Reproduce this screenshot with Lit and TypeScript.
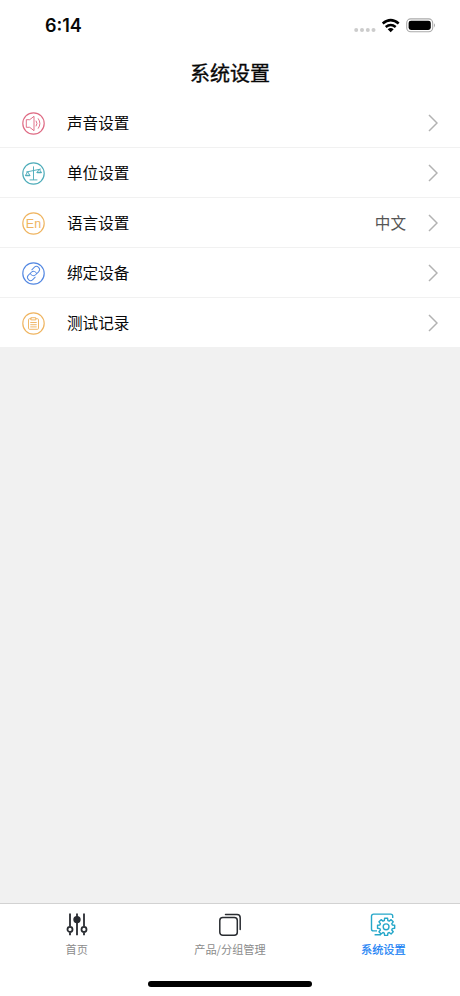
import { LitElement, html, css, svg } from "lit";
import { customElement } from "lit/decorators.js";

const gearPath = () => {
  const points: string[] = [];
  const polar = (r: number, deg: number) => {
    const a = (deg * Math.PI) / 180;
    return `${(r * Math.cos(a)).toFixed(2)} ${(r * Math.sin(a)).toFixed(2)}`;
  };
  for (let i = 0; i < 8; i++) {
    const a = i * 45 - 90;
    points.push(polar(6.5, a - 16), polar(8.7, a - 10), polar(8.7, a + 10), polar(6.5, a + 16));
  }
  return `M${points.join("L")}Z`;
};

const glyphs = {
  sound: svg`<path d="M6.2 9.2h3l4.3-3.4v14.4l-4.3-3.4h-3zM15.7 10.5q1.7 2.5 0 5M17.8 8.2q3.4 4.8 0 9.6"/>`,
  scale: svg`<path d="M13 6.3V19M9.5 19.4h7M6 11.5 20 8.6M5.2 14.6l2-3.4 2 3.4M16.7 11.8l2-3.2 2 3.2"/><path stroke-width="1.5" d="M5.3 14.9h3.8M16.8 12.1h3.8"/>`,
  language: svg`<text x="13" y="17.3" text-anchor="middle">En</text>`,
  link: svg`<g transform="rotate(-45 13 13)"><path d="M11.6 16.8H8.2a3.1 3.1 0 0 1 0-6.2h4.2a3.1 3.1 0 0 1 2.9 4.2M14.4 9.2h3.4a3.1 3.1 0 0 1 0 6.2h-4.2a3.1 3.1 0 0 1-2.9-4.2"/></g>`,
  record: svg`<path d="M10.6 8.2H9a1 1 0 0 0-1 1v8.6a1 1 0 0 0 1 1h8a1 1 0 0 0 1-1V9.2a1 1 0 0 0-1-1h-1.6M10.7 7.2h4.6v2.2h-4.6zM10.2 12h5.6M10.2 14.2h5.6M10.2 16.4h5.6"/>`,
};

const rows = [
  { label: "声音设置", icon: glyphs.sound, tone: "pink", value: "" },
  { label: "单位设置", icon: glyphs.scale, tone: "teal", value: "" },
  { label: "语言设置", icon: glyphs.language, tone: "orange", value: "中文" },
  { label: "绑定设备", icon: glyphs.link, tone: "blue", value: "" },
  { label: "测试记录", icon: glyphs.record, tone: "orange", value: "" },
];

@customElement("app-root")
export class AppRoot extends LitElement {
  static styles = css`
    :host {
      display: flex;
      flex-direction: column;
      height: 996px;
      background: #f1f1f1;
      font-family: Inter, "Noto Sans CJK SC", sans-serif;
      color: #080808;
    }
    svg { display: block; fill: none; flex: none; }
    .status {
      display: flex;
      align-items: center;
      height: 50px;
      padding: 0 24px 0 45px;
      background: #fff;
    }
    .time { flex: 1; font-size: 18px; font-weight: 600; line-height: 24px; padding-top: 2px; }
    .title {
      height: 48px;
      margin: 0;
      background: #fff;
      text-align: center;
      font: 400 20px/46px "Noto Sans CJK SC", sans-serif;
      -webkit-text-stroke: 0.35px #080808;
    }
    .list { background: #fff; }
    .row {
      display: flex;
      align-items: center;
      box-sizing: border-box;
      height: 50px;
      padding: 0 22px 0 20px;
      border-bottom: 1px solid #f1f1f1;
    }
    .badge { width: 27px; height: 27px; stroke: currentColor; stroke-width: 0.95; stroke-linejoin: round; stroke-linecap: round; margin: 1px 20px 0 0; }
    .badge .ring { stroke-width: 1.2; }
    .badge text { fill: currentColor; stroke: none; font: 12.5px "Liberation Sans", sans-serif; }
    .pink { color: #df6c85; }
    .teal { color: #50adba; }
    .orange { color: #efb562; }
    .blue { color: #5589e2; }
    .label { flex: 1; font: 15.6px/24px "Noto Sans CJK SC", sans-serif; padding-bottom: 2px; }
    .value { color: #555; font: 15.6px/24px "Noto Sans CJK SC", sans-serif; margin-right: 22px; padding-bottom: 2px; }
    .chevron { stroke: #b2b2b2; stroke-width: 1.5; }
    .tabs {
      display: grid;
      grid-template-columns: repeat(3, 1fr);
      box-sizing: border-box;
      height: 93px;
      margin-top: auto;
      padding-top: 6px;
      border-top: 1px solid #d2d2d2;
      background: #fff;
      grid-template-rows: 68px 18px;
    }
    .tab { display: flex; flex-direction: column; align-items: center; color: #8b8b8b; font: 11.2px/16px "Noto Sans CJK SC", sans-serif; }
    .tab svg { stroke: #292c31; margin-bottom: 1px; }
    .active { color: #117df5; -webkit-text-stroke: 0.2px #117df5; }
    .tab.active svg { stroke: #25a7c9; }
    .home { grid-column: 1 / -1; justify-self: center; width: 164px; height: 6px; border-radius: 3px; background: #000; margin-top: 3px; }
  `;

  render() {
    return html`
      <header class="status">
        <span class="time">6:14</span>
        <svg width="82" height="20" viewBox="354 15 82 20">
          <g fill="#ccc"><circle cx="356.2" cy="30" r="2"/><circle cx="362" cy="30" r="2"/><circle cx="367.8" cy="30" r="2"/><circle cx="373.5" cy="30" r="2"/></g>
          <g stroke="#000" stroke-width="2.5"><path d="M382.7 23.5q8-6.8 16 0M385.7 27q5-4.1 10 0"/></g>
          <path fill="#000" d="M387.7 29.2q3-2.3 6 0l-3 3.1z"/>
          <rect x="406.7" y="18.9" width="26" height="12.9" rx="4" stroke="#aaa" stroke-width="1.1"/>
          <rect x="408.6" y="20.7" width="22.2" height="9.3" rx="2.4" fill="#000"/>
          <path d="M434 23.3q2 2 0 4.1z" fill="#aaa"/>
        </svg>
      </header>
      <h1 class="title">系统设置</h1>
      <main class="list">
        ${rows.map(
          (row) => html`<div class="row">
            <svg class="badge ${row.tone}" viewBox="-.5 -.5 27 27"><circle class="ring" cx="13" cy="13" r="10.7"/>${row.icon}</svg>
            <span class="label">${row.label}</span>
            <span class="value">${row.value}</span>
            <svg class="chevron" width="10" height="18"><path d="M1 1l8 8-8 8"/></svg>
          </div>`
        )}
      </main>
      <nav class="tabs">
        <div class="tab">
          <svg width="24" height="30" viewBox="0 0 24 30" stroke-width="1.8">
            <path d="M5 3.5v12.8M5 22.2v3M12 3.5v21.8M19 3.5v12.8M19 22.2v3"/>
            <circle cx="5" cy="19.4" r="2.5"/><circle cx="19" cy="19.4" r="2.5"/><circle cx="12" cy="9.6" r="2.8" fill="#292c31"/>
          </svg>
          <span>首页</span>
        </div>
        <div class="tab">
          <svg width="24" height="30" viewBox="0 0 24 30" stroke-width="1.5" stroke-linecap="round">
            <rect x="1.8" y="7.5" width="17.5" height="17.8" rx="3"/><path d="M7.5 4.6H19a3.2 3.2 0 0 1 3.2 3.2v11.7"/>
          </svg>
          <span>产品/分组管理</span>
        </div>
        <div class="tab active">
          <svg width="26" height="30" viewBox="0 0 26 30" stroke-width="1.4" stroke-linejoin="round">
            <path d="M22.7 8V6.1a2 2 0 0 0-2-2H3.5a2 2 0 0 0-2 2v12.8a2 2 0 0 0 2 2H7M4.6 24.7h6.4"/>
            <path transform="translate(16.1 16.8)" d="${gearPath()}"/><circle cx="16.1" cy="16.8" r="2.9"/>
          </svg>
          <span>系统设置</span>
        </div>
        <div class="home"></div>
      </nav>
    `;
  }
}
